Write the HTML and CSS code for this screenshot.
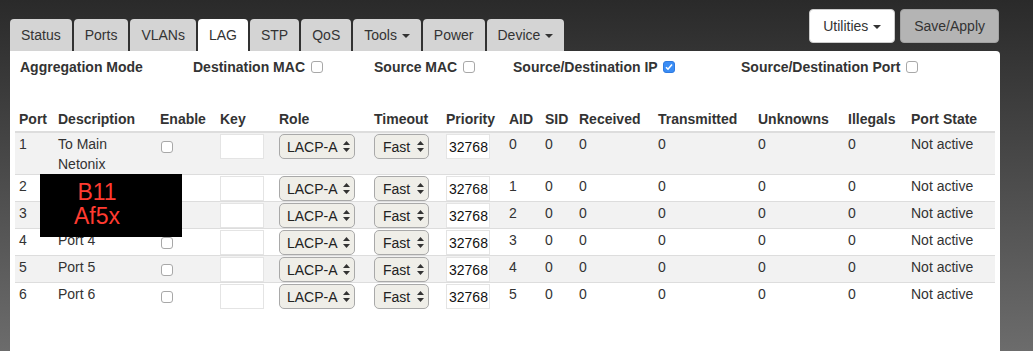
FILE: index.html
```html
<!DOCTYPE html>
<html lang="en">
<head>
    <meta charset="UTF-8">
    <meta name="viewport" content="width=device-width, initial-scale=1.0">
    <title>LAG</title>
    <link rel="stylesheet" href="styles.css">
</head>
<body>
    <div class="page">
        <header class="topbar">
            <ul class="tabs">
                <li class="tab">Status</li>
                <li class="tab">Ports</li>
                <li class="tab">VLANs</li>
                <li class="tab active">LAG</li>
                <li class="tab">STP</li>
                <li class="tab">QoS</li>
                <li class="tab">Tools <span class="caret"></span></li>
                <li class="tab">Power</li>
                <li class="tab">Device <span class="caret"></span></li>
            </ul>
            <div class="actions">
                <button class="btn btn-light">Utilities <span class="caret"></span></button>
                <button class="btn btn-gray">Save/Apply</button>
            </div>
        </header>

        <main class="panel">
            <div class="agg">
                <span>Aggregation Mode</span>
                <label>Destination MAC <input type="checkbox" class="check"></label>
                <label>Source MAC <input type="checkbox" class="check"></label>
                <label>Source/Destination IP <input type="checkbox" class="check" checked></label>
                <label>Source/Destination Port <input type="checkbox" class="check"></label>
            </div>

            <table class="lag">
                <colgroup>
                    <col style="width:39px"><col style="width:102px"><col style="width:60px"><col style="width:59px">
                    <col style="width:95px"><col style="width:72px"><col style="width:63px"><col style="width:36px">
                    <col style="width:34px"><col style="width:79px"><col style="width:100px"><col style="width:90px">
                    <col style="width:63px"><col style="width:88px">
                </colgroup>
                <thead>
                    <tr>
                        <th>Port</th><th>Description</th><th>Enable</th><th>Key</th><th>Role</th><th>Timeout</th>
                        <th>Priority</th><th>AID</th><th>SID</th><th>Received</th><th>Transmitted</th>
                        <th>Unknowns</th><th>Illegals</th><th>Port State</th>
                    </tr>
                </thead>
                <tbody>
                    <tr>
                        <td>1</td><td>To Main Netonix</td>
                        <td><input type="checkbox" class="check"></td>
                        <td><input type="text" class="field"></td>
                        <td><select class="pick role"><option>LACP-A</option></select></td>
                        <td><select class="pick timeout"><option>Fast</option></select></td>
                        <td><input type="text" class="field" value="32768"></td>
                        <td>0</td><td>0</td><td>0</td><td>0</td><td>0</td><td>0</td><td>Not active</td>
                    </tr>
                    <tr>
                        <td>2</td><td></td>
                        <td><input type="checkbox" class="check"></td>
                        <td><input type="text" class="field"></td>
                        <td><select class="pick role"><option>LACP-A</option></select></td>
                        <td><select class="pick timeout"><option>Fast</option></select></td>
                        <td><input type="text" class="field" value="32768"></td>
                        <td>1</td><td>0</td><td>0</td><td>0</td><td>0</td><td>0</td><td>Not active</td>
                    </tr>
                    <tr>
                        <td>3</td><td></td>
                        <td><input type="checkbox" class="check"></td>
                        <td><input type="text" class="field"></td>
                        <td><select class="pick role"><option>LACP-A</option></select></td>
                        <td><select class="pick timeout"><option>Fast</option></select></td>
                        <td><input type="text" class="field" value="32768"></td>
                        <td>2</td><td>0</td><td>0</td><td>0</td><td>0</td><td>0</td><td>Not active</td>
                    </tr>
                    <tr>
                        <td>4</td><td>Port 4</td>
                        <td><input type="checkbox" class="check"></td>
                        <td><input type="text" class="field"></td>
                        <td><select class="pick role"><option>LACP-A</option></select></td>
                        <td><select class="pick timeout"><option>Fast</option></select></td>
                        <td><input type="text" class="field" value="32768"></td>
                        <td>3</td><td>0</td><td>0</td><td>0</td><td>0</td><td>0</td><td>Not active</td>
                    </tr>
                    <tr>
                        <td>5</td><td>Port 5</td>
                        <td><input type="checkbox" class="check"></td>
                        <td><input type="text" class="field"></td>
                        <td><select class="pick role"><option>LACP-A</option></select></td>
                        <td><select class="pick timeout"><option>Fast</option></select></td>
                        <td><input type="text" class="field" value="32768"></td>
                        <td>4</td><td>0</td><td>0</td><td>0</td><td>0</td><td>0</td><td>Not active</td>
                    </tr>
                    <tr>
                        <td>6</td><td>Port 6</td>
                        <td><input type="checkbox" class="check"></td>
                        <td><input type="text" class="field"></td>
                        <td><select class="pick role"><option>LACP-A</option></select></td>
                        <td><select class="pick timeout"><option>Fast</option></select></td>
                        <td><input type="text" class="field" value="32768"></td>
                        <td>5</td><td>0</td><td>0</td><td>0</td><td>0</td><td>0</td><td>Not active</td>
                    </tr>
                </tbody>
            </table>

            <!-- redaction over the descriptions of ports 2 and 3 -->
            <div class="redact">B11<br>Af5x</div>
        </main>
    </div>
</body>
</html>
```

FILE: styles.css
```css
html {
    min-height: 100%;
    background: linear-gradient(#2a2a2a, #6c6c6c) fixed;
}

body {
    margin: 0;
    font-family: "Liberation Sans", Arial, sans-serif;
    font-size: 14px;
    color: #333;
}

.page {
    width: 990px;
    padding-left: 10px;
}

.topbar {
    display: flex;
    justify-content: space-between;
    height: 51px;
}

.tabs {
    display: flex;
    gap: 2px;
    align-self: flex-end;
    list-style: none;
    margin: 0;
    padding: 0;
}

.tab {
    height: 32px;
    line-height: 32px;
    padding: 0 11px;
    background: #d4d4d4;
    border-radius: 4px 4px 0 0;
    color: #333;
}

.tab.active {
    background: #fff;
}

.caret {
    display: inline-block;
    width: 0;
    height: 0;
    margin-left: 1px;
    vertical-align: middle;
    border-top: 4px solid #333;
    border-left: 4px solid transparent;
    border-right: 4px solid transparent;
}

.actions {
    display: flex;
    gap: 5px;
    align-self: flex-start;
    margin-top: 9px;
    padding-right: 1px;
}

.btn {
    height: 34px;
    padding: 0 13px;
    font-family: inherit;
    font-size: 14px;
    color: #333;
    border-radius: 4px;
    border: 1px solid #ccc;
}

.btn-light {
    background: #fff;
}

.btn-gray {
    background: #b4b4b4;
    border-color: #a2a2a2;
}

.panel {
    position: relative;
    box-sizing: border-box;
    min-height: 300px;
    padding: 0 5px;
    background: #fff;
    border-radius: 0 4px 0 0;
}

.agg {
    display: grid;
    grid-template-columns: 173px 181px 139px 228px auto;
    padding: 6px 5px;
    line-height: 20px;
    font-weight: bold;
}

.check {
    appearance: none;
    box-sizing: border-box;
    width: 12px;
    height: 12px;
    margin: 0 0 0 2px;
    vertical-align: -1px;
    background: #fff;
    border: 1px solid #a8a8a8;
    border-radius: 3px;
}

.check:checked {
    background: #3a8df5 url("data:image/svg+xml,%3Csvg xmlns='http://www.w3.org/2000/svg' width='10' height='10'%3E%3Cpath d='M2 5.2l2 2L8 2.6' fill='none' stroke='%23fff' stroke-width='1.6'/%3E%3C/svg%3E") center no-repeat;
    border-color: #2f7ae0;
}

.lag {
    width: 980px;
    margin-top: 20px;
    table-layout: fixed;
    border-collapse: collapse;
}

.lag th {
    padding: 6px 4px 2px;
    line-height: 20px;
    text-align: left;
    border-bottom: 2px solid #ddd;
}

.lag td {
    padding: 1px 4px 0;
    line-height: 20px;
    vertical-align: top;
    border-top: 1px solid #ddd;
}

.lag tbody tr:nth-child(odd) {
    background: #f2f2f2;
}

.lag td .check {
    margin: 7px 0 0 1px;
    vertical-align: top;
}

.field {
    box-sizing: border-box;
    width: 44px;
    height: 25px;
    margin: 0;
    padding: 0 0 0 2px;
    vertical-align: top;
    font-family: inherit;
    font-size: 14px;
    color: #111;
    background: #fff;
    border: 1px solid #e4e4e4;
}

.pick {
    appearance: none;
    box-sizing: border-box;
    height: 25px;
    margin: 0;
    padding: 0 0 0 7px;
    vertical-align: top;
    font-family: inherit;
    font-size: 14px;
    color: #222;
    border: 1px solid #a9a9a9;
    border-radius: 5px;
    background: #efeee8 url("data:image/svg+xml,%3Csvg xmlns='http://www.w3.org/2000/svg' width='7' height='11'%3E%3Cpath d='M3.5 0L7 4H0zM0 7h7l-3.5 4z' fill='%23333'/%3E%3C/svg%3E") right 4px center no-repeat;
}

.role {
    width: 76px;
}

.timeout {
    width: 55px;
    padding-left: 8px;
}

.redact {
    position: absolute;
    left: 30px;
    top: 123px;
    box-sizing: border-box;
    width: 142px;
    height: 63px;
    padding: 6px 28px 0 0;
    background: #000;
    color: #ff3b30;
    font-size: 23px;
    line-height: 24px;
    text-align: center;
}
```
